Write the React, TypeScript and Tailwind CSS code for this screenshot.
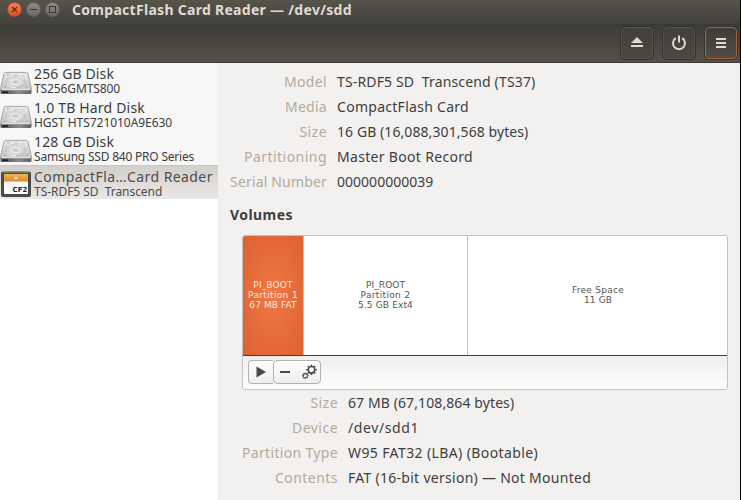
import type { ReactNode } from "react";

type Disk = { name: string; nameClass: string; model: string; modelClass: string; card?: boolean };
type Detail = { label: string; labelClass: string; value: string; valueClass: string };

const disks: Disk[] = [
  { name: "256 GB Disk", nameClass: "tracking-[0.13px]", model: "TS256GMTS800", modelClass: "tracking-[-0.1px]" },
  { name: "1.0 TB Hard Disk", nameClass: "tracking-[0.19px]", model: "HGST HTS721010A9E630", modelClass: "tracking-[-0.05px]" },
  { name: "128 GB Disk", nameClass: "tracking-[0.13px]", model: "Samsung SSD 840 PRO Series", modelClass: "tracking-[-0.21px]" },
  { name: "CompactFla…Card Reader", nameClass: "tracking-[0.42px]", model: "TS-RDF5 SD  Transcend", modelClass: "tracking-[-0.04px]", card: true },
];

const driveDetails: Detail[] = [
  { label: "Model", labelClass: "tracking-[0.34px]", value: "TS-RDF5 SD  Transcend (TS37)", valueClass: "tracking-[0.15px]" },
  { label: "Media", labelClass: "tracking-[0.27px]", value: "CompactFlash Card", valueClass: "tracking-[0.28px]" },
  { label: "Size", labelClass: "tracking-[0.45px]", value: "16 GB (16,088,301,568 bytes)", valueClass: "tracking-[0.08px]" },
  { label: "Partitioning", labelClass: "tracking-[0.46px]", value: "Master Boot Record", valueClass: "tracking-[0.32px]" },
  { label: "Serial Number", labelClass: "tracking-[0.17px]", value: "000000000039", valueClass: "tracking-[0.02px]" },
];

const volumeDetails: Detail[] = [
  { label: "Size", labelClass: "tracking-[0.45px]", value: "67 MB (67,108,864 bytes)", valueClass: "tracking-[0.1px]" },
  { label: "Device", labelClass: "tracking-[0.47px]", value: "/dev/sdd1", valueClass: "tracking-[0.59px]" },
  { label: "Partition Type", labelClass: "tracking-[0.33px]", value: "W95 FAT32 (LBA) (Bootable)", valueClass: "tracking-[0.39px]" },
  { label: "Contents", labelClass: "tracking-[0.46px]", value: "FAT (16-bit version) — Not Mounted", valueClass: "tracking-[0.28px]" },
];

function HardDiskIcon() {
  return (
    <svg width="32" height="24" viewBox="0 0 32 26" preserveAspectRatio="none" className="shrink-0">
      <defs>
        <linearGradient id="diskTop" x1="0" y1="0" x2="0" y2="1">
          <stop offset="0" stopColor="#e6e6e6" />
          <stop offset="1" stopColor="#c2c2c2" />
        </linearGradient>
        <linearGradient id="diskFront" x1="0" y1="0" x2="1" y2="0">
          <stop offset="0" stopColor="#4c4c4c" />
          <stop offset="0.6" stopColor="#8a8a8a" />
          <stop offset="1" stopColor="#5f5f5f" />
        </linearGradient>
      </defs>
      <path d="M0.5 19.5h31v4q0 1.5-1.5 1.5H2Q0.5 25 0.5 23.5z" fill="url(#diskFront)" />
      <path d="M5.6 1.5h20.8q1.2 0 1.6 1.2L31.4 19q.2 1.7-1.4 1.7H2Q.4 20.7.6 19L4 2.7Q4.4 1.500 5.600 1.500z" fill="url(#diskTop)" stroke="#a2a2a2" />
      <path d="M2 19.800h28" stroke="#ededed" />
      <ellipse cx="15.500" cy="11.500" rx="9.500" ry="6.500" fill="#d8d8d8" stroke="#bdbdbd" />
      <path d="M7 15q3 3.500 9 3.200M8.500 6.800q2-2 6-2.300" fill="none" stroke="#f2f2f2" />
      <ellipse cx="15.500" cy="12" rx="4.700" ry="2.700" fill="#d3d3d3" stroke="#f5f5f5" />
      <ellipse cx="15.500" cy="12" rx="2" ry="1" fill="#c4c4c4" />
      <path d="M18 4h7.500l.8 3.500-3 .8-2.500-2-2.500-.3z" fill="#d6d6d6" stroke="#f0f0f0" strokeWidth="0.800" />
      <path d="M7 4h2M26.500 17.500h1.500M4 17.500h1.500" stroke="#a0a0a0" />
      <path d="M3 22.900h5" stroke="#171717" strokeWidth="1.500" />
    </svg>
  );
}

function FlashCardIcon() {
  return (
    <svg width="32" height="28" viewBox="0 0 32 28" className="shrink-0">
      <defs>
        <linearGradient id="cardStripe" x1="0" y1="0" x2="0" y2="1">
          <stop offset="0" stopColor="#efb65c" />
          <stop offset="1" stopColor="#dd8620" />
        </linearGradient>
      </defs>
      <rect x="1" y="1.500" width="30" height="25.500" rx="2" fill="#4d4b47" />
      <path d="M2.500 2.500h27" stroke="#77746f" />
      <path d="M4 4h24v19q0 1-1 1H5q-1 0-1-1z" fill="#fafafa" />
      <path d="M4 11.500V4h24v7.500z" fill="url(#cardStripe)" />
      <path d="M16 6.500l2 2.500h-4z" fill="#fff0d8" />
      <text x="12.500" y="22" className="font-['DejaVu_Sans'] text-[7px] font-bold" fill="#222222">CF2</text>
    </svg>
  );
}

function WindowButton({ close, children }: { close?: boolean; children: ReactNode }) {
  return (
    <div
      className={
        close
          ? "size-[15px] rounded-full border border-[#a5482a] bg-linear-to-b from-[#f58157] to-[#df4f20]"
          : "size-[15px] rounded-full border border-[#5f5d56] bg-linear-to-b from-[#8f8d85] to-[#6b6a63]"
      }
    >
      <svg width="13" height="13" viewBox="0 0 13 13" fill="none" stroke="#3b3530" strokeWidth="1.1">
        {children}
      </svg>
    </div>
  );
}

function ToolButton({ active, children }: { active?: boolean; children: ReactNode }) {
  return (
    <div
      className={
        active
          ? "flex size-8 items-center justify-center rounded-[4px] border border-[#a8603f] bg-linear-to-b from-[#3d3c37] to-[#504d45] outline outline-[#37352f]"
          : "flex size-8 items-center justify-center rounded-[4px] border border-[#55534b] bg-linear-to-b from-[#403f3a] to-[#4b4942] outline outline-[#33322d]"
      }
    >
      <svg width="16" height="16" viewBox="0 0 16 16" fill="#dfdbd2">{children}</svg>
    </div>
  );
}

function Gear({ x, y, r }: { x: number; y: number; r: number }) {
  return (
    <g transform={`translate(${x} ${y})`} fill="none" stroke="#4a4a4a">
      <circle r={r} strokeWidth={r * 0.5} />
      {[0, 45, 90, 135, 180, 225, 270, 315].map((a) => (
        <path key={a} d={`M0 ${-r * 1.1}V${-r * 1.6}`} strokeWidth={r * 0.45} transform={`rotate(${a})`} />
      ))}
    </g>
  );
}

function Details({ items, columns }: { items: Detail[]; columns: string }) {
  return (
    <dl className={`grid auto-rows-[25px] items-center gap-x-[10px] text-[14px] leading-[25px] whitespace-pre ${columns}`}>
      {items.map((d) => (
        <div key={d.label} className="contents">
          <dt className={`text-right text-[#b4aa9c] ${d.labelClass}`}>{d.label}</dt>
          <dd className={`text-[#3e3e3e] ${d.valueClass}`}>{d.value}</dd>
        </div>
      ))}
    </dl>
  );
}

export default function App() {
  return (
    <div className="flex h-[500px] w-[741px] overflow-hidden bg-black font-['Noto_Sans',sans-serif]">
      <div className="flex w-[740px] flex-col bg-[#f2f1f0]">
        <header className="flex h-6 shrink-0 items-center bg-linear-to-b from-[#57544a] to-[#42413c] pb-[5px] pl-[7px]">
          <div className="flex gap-1">
            <WindowButton close>
              <path d="M4 4l5 5m0-5l-5 5" />
            </WindowButton>
            <WindowButton>
              <path d="M3 6.500h7" />
            </WindowButton>
            <WindowButton>
              <path d="M3.500 3.500h6v6h-6z" />
            </WindowButton>
          </div>
          <h1 className="ml-[12px] text-[14px] leading-[18px] font-bold tracking-[0.29px] whitespace-pre text-[#dfdbd2]">
            CompactFlash Card Reader — /dev/sdd
          </h1>
        </header>
        <div className="flex h-[39px] shrink-0 items-center justify-end gap-[10px] border-t border-b border-t-[#3a3935] border-b-[#3c3b37] bg-linear-to-b from-[#3d3c38] to-[#545147] pr-[3px] pb-[1px]">
          <ToolButton>
            <path d="M8 2l6 6H2zM2 10h12v2H2z" />
          </ToolButton>
          <ToolButton>
            <path d="M7 .5h2v7H7z" />
            <path d="M4.700 3.200a6 6 0 1 0 6.600 0" fill="none" stroke="#dfdbd2" strokeWidth="2" />
          </ToolButton>
          <ToolButton active>
            <path d="M3 3h10v2H3zM3 7h10v2H3zM3 11h10v2H3z" />
          </ToolButton>
        </div>

        <div className="flex min-h-0 flex-1">
          <aside className="w-[218px] shrink-0 bg-white">
            {disks.map((d) => (
              <div
                key={d.name}
                className={
                  d.card
                    ? "flex h-[34px] items-center gap-[2px] border-t border-[#c8c4c0] bg-linear-to-b from-[#d3cfcb] to-[#eae8e6] text-[#4c4c4c]"
                    : "flex h-[34px] items-center gap-[2px] bg-[#f7f7f7] text-[#3c3c3c]"
                }
              >
                <div className={d.card ? "pt-[3px]" : "pt-[5px]"}>{d.card ? <FlashCardIcon /> : <HardDiskIcon />}</div>
                <div className="whitespace-pre">
                  <div className={`text-[14px] leading-[18px] ${d.nameClass}`}>{d.name}</div>
                  <div className={`text-[12px] leading-[12px] ${d.modelClass}`}>{d.model}</div>
                </div>
              </div>
            ))}
          </aside>

          <main className="flex-1 pt-[6px] pl-3">
            <Details items={driveDetails} columns="grid-cols-[97px_1fr]" />
            <h2 className="mt-[9px] text-[14px] leading-[24px] font-bold tracking-[0.44px] text-[#3e3e3e]">Volumes</h2>

            <section className="mt-[8px] ml-3 flex h-[155px] w-[486px] flex-col overflow-hidden rounded-[3px] border border-[#c4c2c0]">
              <div className="flex h-[120px] border-b border-[#3f3f3f] bg-white text-center font-['DejaVu_Sans',sans-serif] text-[9px] leading-[10px] whitespace-nowrap text-[#555555]">
                <div className="flex w-[61px] flex-col justify-center border-r border-[#c4c2c0] bg-radial from-[#f07746] to-[#dc6230] pb-[2px] text-[#fbe9df]">
                  <p className="tracking-[0.15px]">PI_BOOT</p>
                  <p className="tracking-[0.35px]">Partition 1</p>
                  <p className="tracking-[0.1px]">67 MB FAT</p>
                </div>
                <div className="flex w-[164px] flex-col justify-center border-r border-[#c4c2c0] pb-[2px]">
                  <p className="tracking-[0.1px]">PI_ROOT</p>
                  <p className="tracking-[0.35px]">Partition 2</p>
                  <p className="tracking-[0.14px]">5.5 GB Ext4</p>
                </div>
                <div className="flex flex-1 flex-col justify-center pb-[2px] pl-[1px]">
                  <p className="tracking-[0.26px]">Free Space</p>
                  <p className="tracking-[0.1px]">11 GB</p>
                </div>
              </div>
              <div className="flex flex-1 items-center bg-linear-to-b from-[#efeeed] to-[#fefefe] pb-[2px] pl-[5px]">
                <div className="flex h-6 w-[25px] items-center justify-center rounded-l-[4px] border border-r-0 border-[#b3b1af] bg-linear-to-b from-white to-[#efeeed]">
                  <svg width="12" height="12" viewBox="0 0 12 12"><path d="M1.500 .5l9.500 5.500-9.500 5.500z" fill="#4a4a4a" /></svg>
                </div>
                <div className="flex h-6 w-12 items-center rounded-[4px] border border-[#b3b1af] bg-linear-to-b from-white to-[#efeeed]">
                  <svg width="46" height="22" viewBox="0 0 46 22">
                    <path d="M6 10h10v2H6z" fill="#4a4a4a" />
                    <Gear x={37.5} y={8.8} r={3.3} />
                    <Gear x={31.3} y={14.7} r={2.1} />
                  </svg>
                </div>
              </div>
            </section>

            <Details items={volumeDetails} columns="ml-3 grid-cols-[96px_1fr]" />
          </main>
        </div>
      </div>
    </div>
  );
}
